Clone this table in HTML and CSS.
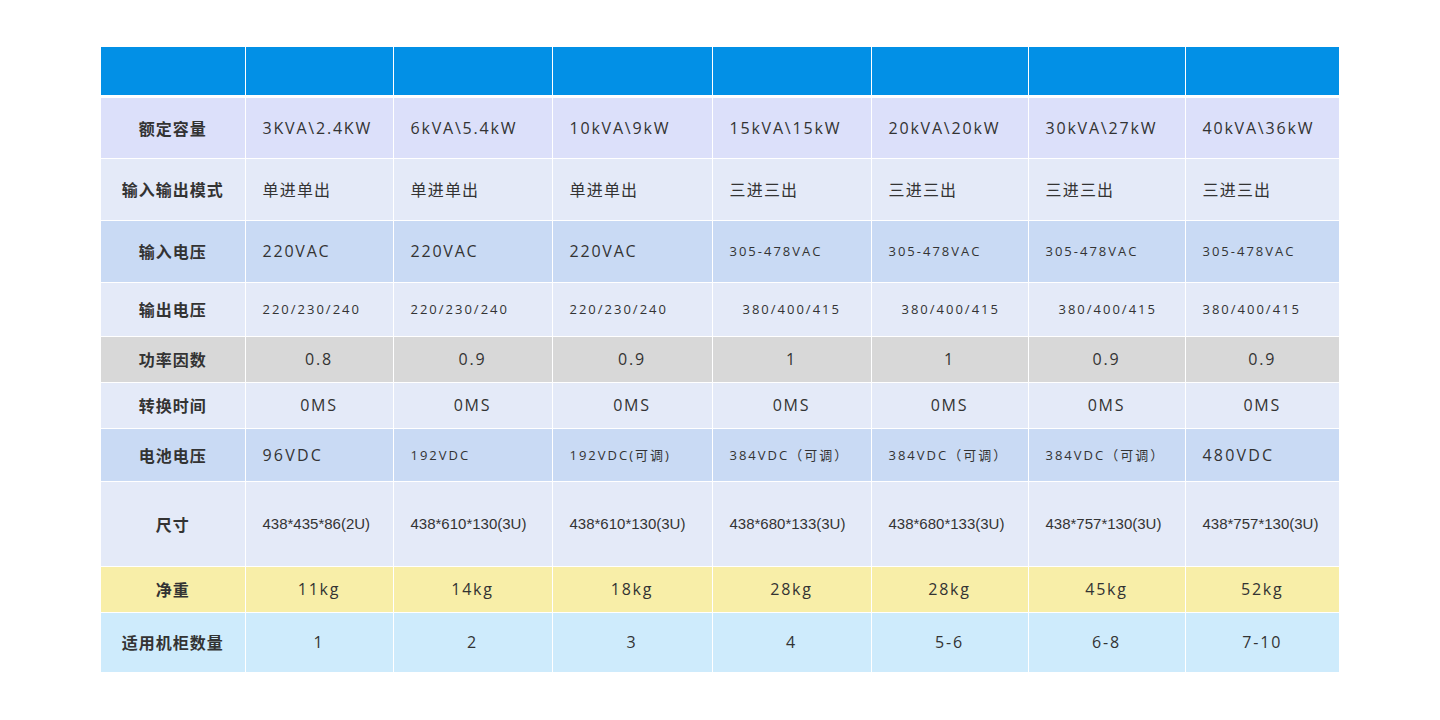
FILE: index.html
```html
<!DOCTYPE html>
<html lang="zh-CN">
<head>
<meta charset="utf-8">
<title>UPS 参数表</title>
<link rel="stylesheet" href="styles.css">
</head>
<body>
<div class="wrap">
<table class="spec">
  <colgroup>
    <col class="c0"><col class="c1"><col class="c2"><col class="c3"><col class="c4"><col class="c5"><col class="c6"><col class="c7">
  </colgroup>
  <tr class="r-head">
    <th></th><th></th><th></th><th></th><th></th><th></th><th></th><th></th>
  </tr>
  <tr class="r-cap">
    <th>额定容量</th>
    <td class="big">3KVA\2.4KW</td><td class="big">6kVA\5.4kW</td><td class="big">10kVA\9kW</td><td class="big">15kVA\15kW</td><td class="big">20kVA\20kW</td><td class="big">30kVA\27kW</td><td class="big">40kVA\36kW</td>
  </tr>
  <tr class="r-mode">
    <th>输入输出模式</th>
    <td class="cn">单进单出</td><td class="cn">单进单出</td><td class="cn">单进单出</td><td class="cn">三进三出</td><td class="cn">三进三出</td><td class="cn">三进三出</td><td class="cn">三进三出</td>
  </tr>
  <tr class="r-in">
    <th>输入电压</th>
    <td class="big">220VAC</td><td class="big">220VAC</td><td class="big">220VAC</td><td class="sm">305-478VAC</td><td class="sm">305-478VAC</td><td class="sm">305-478VAC</td><td class="sm">305-478VAC</td>
  </tr>
  <tr class="r-out">
    <th>输出电压</th>
    <td class="sm">220/230/240</td><td class="sm">220/230/240</td><td class="sm">220/230/240</td><td class="sm ind">380/400/415</td><td class="sm ind">380/400/415</td><td class="sm ind">380/400/415</td><td class="sm">380/400/415</td>
  </tr>
  <tr class="r-pf">
    <th>功率因数</th>
    <td class="big mid">0.8</td><td class="big mid">0.9</td><td class="big mid">0.9</td><td class="big mid">1</td><td class="big mid">1</td><td class="big mid">0.9</td><td class="big mid">0.9</td>
  </tr>
  <tr class="r-time">
    <th>转换时间</th>
    <td class="big mid">0MS</td><td class="big mid">0MS</td><td class="big mid">0MS</td><td class="big mid">0MS</td><td class="big mid">0MS</td><td class="big mid">0MS</td><td class="big mid">0MS</td>
  </tr>
  <tr class="r-bat">
    <th>电池电压</th>
    <td class="big wide">96VDC</td><td class="sm">192VDC</td><td class="sm">192VDC(可调)</td><td class="sm">384VDC（可调）</td><td class="sm">384VDC（可调）</td><td class="sm">384VDC（可调）</td><td class="big wide">480VDC</td>
  </tr>
  <tr class="r-size">
    <th>尺寸</th>
    <td class="dim">438*435*86(2U)</td><td class="dim">438*610*130(3U)</td><td class="dim">438*610*130(3U)</td><td class="dim">438*680*133(3U)</td><td class="dim">438*680*133(3U)</td><td class="dim">438*757*130(3U)</td><td class="dim">438*757*130(3U)</td>
  </tr>
  <tr class="r-wt">
    <th>净重</th>
    <td class="big mid">11kg</td><td class="big mid">14kg</td><td class="big mid">18kg</td><td class="big mid">28kg</td><td class="big mid">28kg</td><td class="big mid">45kg</td><td class="big mid">52kg</td>
  </tr>
  <tr class="r-rack">
    <th>适用机柜数量</th>
    <td class="big mid">1</td><td class="big mid">2</td><td class="big mid">3</td><td class="big mid">4</td><td class="big mid">5-6</td><td class="big mid">6-8</td><td class="big mid">7-10</td>
  </tr>
</table>
</div>
</body>
</html>
```
FILE: styles.css
```css
html, body {
  margin: 0;
  padding: 0;
  background: #ffffff;
}
body {
  font-family: "Open Sans", "Noto Sans CJK SC", sans-serif;
  color: #333333;
}
.wrap {
  width: 1238px;
  margin: 47px auto 0;
}
.spec {
  width: 1238px;
  table-layout: fixed;
  border-collapse: collapse;
}
.c0 { width: 144px; }
.c1 { width: 148px; }
.c2 { width: 159px; }
.c3 { width: 160px; }
.c4 { width: 159px; }
.c5 { width: 157px; }
.c6 { width: 157px; }
.c7 { width: 154px; }

.spec th, .spec td {
  border: 1px solid #ffffff;
  padding: 0 0 0 17px;
  text-align: left;
  vertical-align: middle;
  white-space: nowrap;
  overflow: hidden;
}
.spec th {
  padding: 0;
  text-align: center;
  font-family: "Noto Sans CJK SC", sans-serif;
  font-weight: 700;
  font-size: 16px;
  letter-spacing: 1px;
  color: #333333;
}
.spec tr:first-child th, .spec tr:first-child td { border-top: 0; }
.spec tr th:first-child { border-left: 0; }
.spec tr td:last-child, .spec tr th:last-child { border-right: 0; }
.spec tr:last-child th, .spec tr:last-child td { border-bottom: 0; }

.r-head { height: 49px; background: #0290e6; }
.r-head th { border-bottom: 3px solid #ffffff; }
.r-cap  { height: 62px; background: #dce0fa; }
.r-mode { height: 62px; background: #e4eaf8; }
.r-in   { height: 62px; background: #c9daf4; }
.r-out  { height: 54px; background: #e4eaf8; }
.r-pf   { height: 46px; background: #d8d8d8; }
.r-time { height: 46px; background: #e4eaf8; }
.r-bat  { height: 53px; background: #c9daf4; }
.r-size { height: 85px; background: #e4eaf8; }
.r-wt   { height: 46px; background: #f8eea8; }
.r-rack { height: 60px; background: #ceebfc; }

.big {
  font-size: 16px;
  letter-spacing: 1.8px;
}
.wide { letter-spacing: 2.2px; }
.sm {
  font-size: 13px;
  letter-spacing: 2px;
}
.cn {
  font-family: "Noto Sans CJK SC", sans-serif;
  font-size: 16px;
  letter-spacing: 1.2px;
}
.dim {
  font-family: "Liberation Sans", "Noto Sans CJK SC", sans-serif;
  font-size: 15px;
  letter-spacing: 0;
}
.spec td.mid {
  padding: 0;
  text-align: center;
}
.spec td.ind { padding-left: 30px; }
```
